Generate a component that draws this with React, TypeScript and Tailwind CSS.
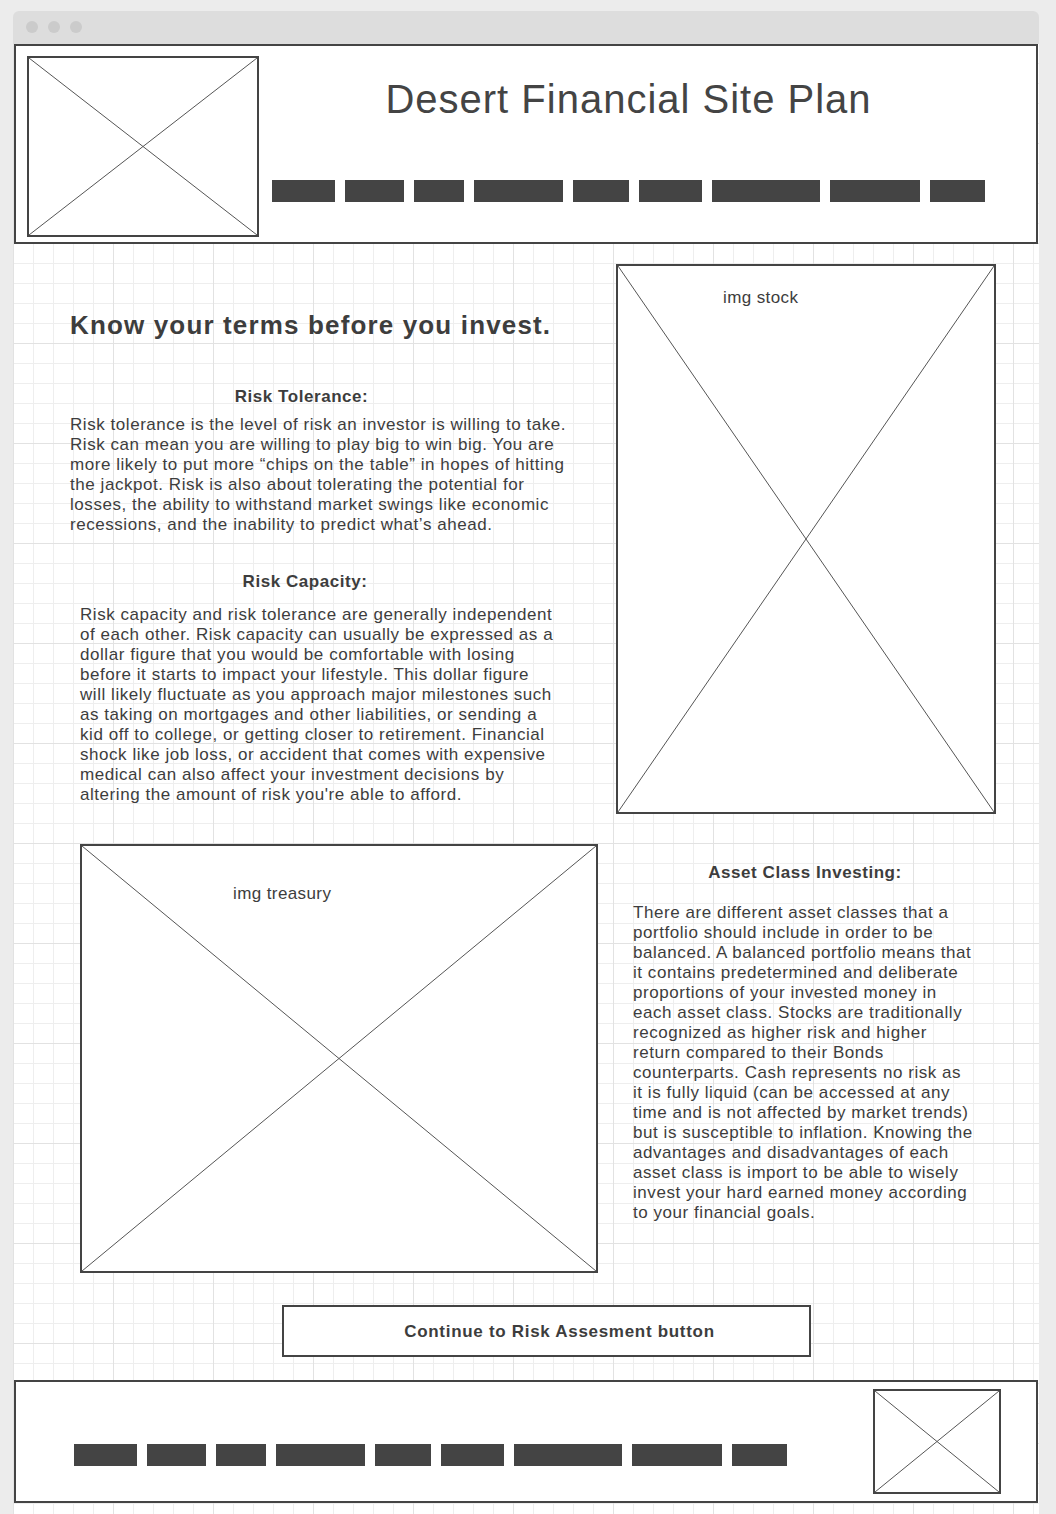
import type { ReactNode } from 'react';

const NAV_WIDTHS = [63, 59, 50, 89, 56, 63, 108, 90, 55];

const TOLERANCE = [
  'Risk tolerance is the level of risk an investor is willing to take.',
  'Risk can mean you are willing to play big to win big. You are',
  'more likely to put more “chips on the table” in hopes of hitting',
  'the jackpot. Risk is also about tolerating the potential for',
  'losses, the ability to withstand market swings like economic',
  'recessions, and the inability to predict what’s ahead.',
];

const CAPACITY = [
  'Risk capacity and risk tolerance are generally independent',
  'of each other. Risk capacity can usually be expressed as a',
  'dollar figure that you would be comfortable with losing',
  'before it starts to impact your lifestyle. This dollar figure',
  'will likely fluctuate as you approach major milestones such',
  'as taking on mortgages and other liabilities, or sending a',
  'kid off to college, or getting closer to retirement. Financial',
  'shock like job loss, or accident that comes with expensive',
  'medical can also affect your investment decisions by',
  "altering the amount of risk you're able to afford.",
];

const ASSET = [
  'There are different asset classes that a',
  'portfolio should include in order to be',
  'balanced. A balanced portfolio means that',
  'it contains predetermined and deliberate',
  'proportions of your invested money in',
  'each asset class. Stocks are traditionally',
  'recognized as higher risk and higher',
  'return compared to their Bonds',
  'counterparts. Cash represents no risk as',
  'it is fully liquid (can be accessed at any',
  'time and is not affected by market trends)',
  'but is susceptible to inflation. Knowing the',
  'advantages and disadvantages of each',
  'asset class is import to be able to wisely',
  'invest your hard earned money according',
  'to your financial goals.',
];

// image placeholder: box with a cross
function Placeholder({ className, children }: { className: string; children?: ReactNode }) {
  return (
    <div className={`relative shrink-0 border-2 border-[#444] bg-white ${className}`}>
      <svg className="absolute inset-0 h-full w-full" viewBox="0 0 100 100" preserveAspectRatio="none">
        <line x1="0" y1="0" x2="100" y2="100" stroke="#555" strokeWidth="1" vectorEffect="non-scaling-stroke" />
        <line x1="100" y1="0" x2="0" y2="100" stroke="#555" strokeWidth="1" vectorEffect="non-scaling-stroke" />
      </svg>
      {children}
    </div>
  );
}

function NavBars() {
  return (
    <div className="flex gap-[10px]">
      {NAV_WIDTHS.map((w, i) => (
        <div key={i} className="h-[22px] bg-[#444]" style={{ width: w }} />
      ))}
    </div>
  );
}

function Lines({ lines, className = '' }: { lines: string[]; className?: string }) {
  return (
    <p className={`whitespace-nowrap text-[17px] leading-[20px] tracking-[0.55px] text-[#3d3d3d] ${className}`}>
      {lines.map((l, i) => (
        <span key={i}>
          {l}
          {i < lines.length - 1 && <br />}
        </span>
      ))}
    </p>
  );
}

export default function App() {
  return (
    <div className="h-[1514px] overflow-hidden bg-[#ececec] pl-[13px] pt-[11px] font-['Liberation_Sans',Arial,sans-serif]">
      <div className="flex h-full w-[1026px] flex-col">
        {/* window title bar */}
        <div className="flex h-[33px] shrink-0 items-center gap-[10px] rounded-t-[6px] bg-[#dddddd] pl-[13px] pb-px">
          <span className="h-[12px] w-[12px] rounded-full bg-[#cbcbcb]" />
          <span className="h-[12px] w-[12px] rounded-full bg-[#cbcbcb]" />
          <span className="h-[12px] w-[12px] rounded-full bg-[#cbcbcb]" />
        </div>

        <div className="flex-1 bg-white bg-[linear-gradient(to_right,#e2e2e2_1px,transparent_1px),linear-gradient(to_bottom,#e2e2e2_1px,transparent_1px),linear-gradient(to_right,#eeeeee_1px,transparent_1px),linear-gradient(to_bottom,#eeeeee_1px,transparent_1px)] bg-size-[100px_100px,100px_100px,20px_20px,20px_20px] bg-position-[0_-1px]">
          {/* header */}
          <header className="ml-px flex h-[200px] w-[1024px] border-2 border-[#444] bg-white pl-[11px] pt-[10px]">
            <Placeholder className="h-[181px] w-[232px]" />
            <div className="ml-[13px] flex w-[713px] flex-col items-center">
              <h1 className="mt-[19px] text-[40px] leading-[48px] tracking-[1px] text-[#444]">Desert Financial Site Plan</h1>
              <div className="mt-[57px] self-start">
                <NavBars />
              </div>
            </div>
          </header>

          {/* terms + stock image */}
          <section className="flex items-start pt-[20px]">
            <div className="ml-[57px] w-[500px] pt-[46px] text-[#3d3d3d]">
              <h2 className="whitespace-nowrap text-[26px] font-bold leading-[30px] tracking-[1.15px]">Know your terms before you invest.</h2>
              <h3 className="mt-[47px] w-[463px] text-center text-[17px] font-bold leading-[20px] tracking-[0.55px]">Risk Tolerance:</h3>
              <Lines lines={TOLERANCE} className="mt-[8px]" />
              <h3 className="mt-[37px] w-[470px] text-center text-[17px] font-bold leading-[20px] tracking-[0.55px]">Risk Capacity:</h3>
              <Lines lines={CAPACITY} className="ml-[10px] mt-[13px]" />
            </div>
            <Placeholder className="ml-[46px] h-[550px] w-[380px]">
              <span className="absolute left-[105px] top-[22px] text-[17px] leading-[20px] tracking-[0.4px] text-[#3d3d3d]">img stock</span>
            </Placeholder>
          </section>

          {/* treasury image + asset classes */}
          <section className="mt-[30px] flex items-start">
            <Placeholder className="ml-[67px] h-[429px] w-[518px]">
              <span className="absolute left-[151px] top-[38px] text-[17px] leading-[20px] tracking-[0.4px] text-[#3d3d3d]">img treasury</span>
            </Placeholder>
            <div className="ml-[35px] w-[344px] pt-[19px]">
              <h3 className="text-center text-[17px] font-bold leading-[20px] tracking-[0.55px] text-[#3d3d3d]">Asset Class Investing:</h3>
              <Lines lines={ASSET} className="mt-[20px]" />
            </div>
          </section>

          <button className="ml-[269px] mt-[32px] flex h-[52px] w-[529px] items-center justify-center border-2 border-[#444] bg-white pl-[26px] pt-px text-[17px] font-bold tracking-[0.7px] text-[#3d3d3d]">
            Continue to Risk Assesment button
          </button>

          {/* footer */}
          <footer className="ml-px mt-[23px] flex h-[123px] w-[1024px] items-start border-2 border-[#444] bg-white">
            <div className="ml-[58px] mt-[62px]">
              <NavBars />
            </div>
            <Placeholder className="ml-auto mr-[35px] mt-[7px] h-[105px] w-[128px]" />
          </footer>
        </div>
      </div>
    </div>
  );
}
